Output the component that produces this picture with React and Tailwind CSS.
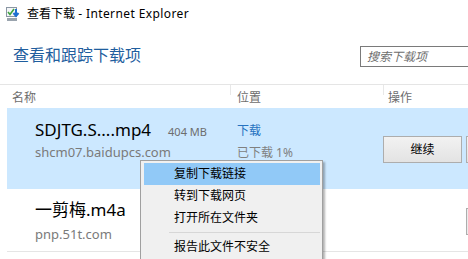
import React from "react";

const font = { fontFamily: '"Noto Sans", "Noto Sans CJK SC", sans-serif' };

function TitleIcon() {
  return (
    <svg width="16" height="16" viewBox="0 0 16 16">
      <rect x="1.5" y="1.5" width="10" height="9" fill="#f4f6f8" stroke="#8a96a3" />
      <path d="M3 6 L5 8.5 L9 3" stroke="#3ea33e" strokeWidth="1.6" fill="none" />
      <rect x="2" y="12" width="10" height="3" fill="#9aa4ae" />
      <path d="M11 3 V9 M8.5 7 L11 10 L13.5 7" stroke="#1d6fd1" strokeWidth="2" fill="none" />
    </svg>
  );
}

function Btn({ children }) {
  return (
    <div className="w-[79px] h-[27px] shrink-0 border border-[#adadad] bg-gradient-to-b from-[#f2f2f2] to-[#e3e3e3] flex items-center justify-center text-[12px] text-black">
      {children}
    </div>
  );
}

export default function App() {
  return (
    <div className="w-[468px] h-[259px] overflow-hidden bg-white relative" style={font}>
      <div className="w-[560px]">
        {/* title bar */}
        <div className="h-[28px] flex items-center pl-[5px] gap-[6px]">
          <TitleIcon />
          <span className="text-[12px] leading-[16px] text-black">
            查看下载 <span className="tracking-[0.4px]">- Internet Explorer</span>
          </span>
        </div>
        {/* header */}
        <div className="h-[56px] flex items-start">
          <div className="w-[360px] pl-[13px] pt-[16px] text-[16px] leading-[22px] text-[#1f5e9e]">查看和跟踪下载项</div>
          <div className="mt-[18px] w-[140px] h-[21px] border border-[#7a7a7a] pl-[6px] flex items-center text-[12px] italic text-[#6d6d6d]">搜索下载项</div>
        </div>
        {/* column header */}
        <div className="h-[24px] border-t border-[#e5e5e5] flex text-[12px] leading-[16px] text-[#6d6d6d]">
          <div className="w-[230px] pl-[12px] pt-[5px]">名称</div>
          <div className="w-[153px] pl-[7px] pt-[5px] relative">
            <span className="absolute left-0 top-0 h-[10px] w-px bg-[#e8e8e8]"></span>
            位置
          </div>
          <div className="pl-[5px] pt-[5px] relative">
            <span className="absolute left-0 top-0 h-[10px] w-px bg-[#e8e8e8]"></span>
            操作
          </div>
        </div>
        {/* row 1 selected */}
        <div className="ml-[7px] h-[81px] bg-[#cce8ff] flex">
          <div className="w-[223px] pl-[28px] pt-[11px]">
            <div className="flex items-baseline">
              <span className="text-[17px] leading-[22px] text-black">SDJTG.S....mp4</span>
              <span className="ml-[17px] text-[11px] text-[#6d6d6d]">404 MB</span>
            </div>
            <div className="mt-[2px] text-[13px] leading-[18px] text-[#7a7a7a]">shcm07.baidupcs.com</div>
          </div>
          <div className="w-[153px] pl-[7px] pt-[15px] text-[12px] leading-[16px]">
            <div className="text-[#2672c0]">下载</div>
            <div className="mt-[6px] text-[#808080]">已下载 1%</div>
          </div>
          <div className="pt-[28px] flex gap-[4px]">
            <Btn>继续</Btn>
            <Btn></Btn>
          </div>
        </div>
        {/* row 2 */}
        <div className="ml-[7px] h-[63px] border-b border-[#e5e5e5] flex">
          <div className="w-[223px] pl-[28px] pt-[10px]">
            <div className="text-[17px] leading-[22px] text-black">一剪梅.m4a</div>
            <div className="mt-[4px] text-[13px] leading-[18px] text-[#7a7a7a]">pnp.51t.com</div>
          </div>
          <div className="w-[153px]"></div>
          <div className="pt-[19px] pl-[83px]">
            <div className="w-[79px] h-[27px] border border-[#adadad] bg-[#ececec]"></div>
          </div>
        </div>
      </div>
      {/* context menu */}
      <div className="absolute left-[140px] top-[160px] w-[183px] h-[120px] bg-[#f0f0f0] border border-[#a0a0a0] shadow-[2px_2px_2px_rgba(0,0,0,0.3)] pt-[2px] px-[2px] text-[12px] text-black">
        <div className="h-[22px] ml-[1px] bg-[#91c9f7] flex items-center pl-[30px]">复制下载链接</div>
        <div className="h-[22px] flex items-center pl-[31px]">转到下载网页</div>
        <div className="h-[22px] flex items-center pl-[31px]">打开所在文件夹</div>
        <div className="h-[7px] flex items-center pl-[26px]">
          <div className="h-px w-full bg-[#d7d7d7]"></div>
        </div>
        <div className="h-[22px] flex items-center pl-[31px]">报告此文件不安全</div>
      </div>
    </div>
  );
}
